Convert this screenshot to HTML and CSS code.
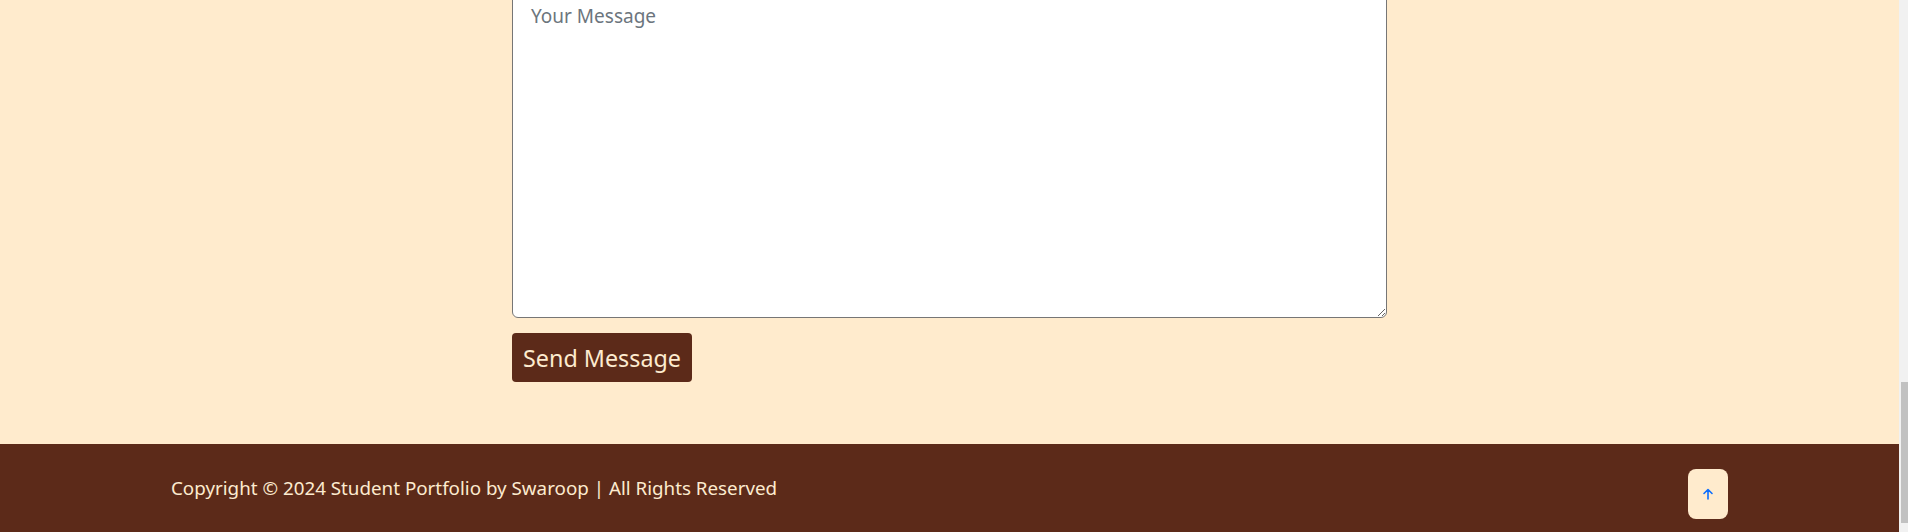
FILE: index.html
```html
<!DOCTYPE html>
<html lang="en">
<head>
<meta charset="utf-8">
<title>Contact</title>
<link rel="stylesheet" href="styles.css">
</head>
<body>
<div class="page">
  <div class="viewport">
    <section class="contact">
      <form class="contact-form">
        <textarea class="message" placeholder="Your Message"></textarea>
        <button type="button" class="send-btn">Send Message</button>
      </form>
    </section>
    <footer class="footer">
      <p class="copy">Copyright © 2024 Student Portfolio by Swaroop | All Rights Reserved</p>
      <a class="to-top" href="#" aria-label="Back to top">
        <svg width="12" height="12" viewBox="0 0 12 12" fill="none" stroke="#0d6efd" stroke-width="1.6" stroke-linecap="round" stroke-linejoin="round"><path d="M6 11V1.5M2 5.5L6 1.5L10 5.5"/></svg>
      </a>
    </footer>
  </div>
  <div class="scrollbar"><div class="thumb"></div></div>
</div>
</body>
</html>
```

FILE: styles.css
```css
* { box-sizing: border-box; }
html, body { margin: 0; padding: 0; }
body {
  font-family: "Noto Sans", "Open Sans", sans-serif;
  background: #ffebcd;
}
.page {
  display: flex;
  height: 532px;
  overflow: hidden;
}
.viewport {
  flex: 1;
  display: flex;
  flex-direction: column;
  justify-content: flex-end;
  overflow: hidden;
  background: #ffebcd;
}
.contact {
  padding-bottom: 62px;
}
.contact-form {
  width: 875px;
  margin: 0 auto;
}
.message {
  display: block;
  width: 100%;
  height: 327px;
  padding: 10px 18px 5px;
  border: 1px solid #767676;
  border-radius: 6px;
  background: #fff;
  font-family: inherit;
  font-size: 19px;
  line-height: 1.5;
  color: #212529;
}
.message::placeholder { color: #6c757d; }
.send-btn {
  display: block;
  margin-top: 15px;
  height: 49px;
  width: 180px;
  padding: 0 10px;
  border: none;
  border-radius: 4px;
  background: #5c2a19;
  color: #fdebcf;
  font-family: inherit;
  font-size: 23.3px;
}
.footer {
  height: 88px;
  flex: none;
  background: #5c2a19;
  padding: 0 171px;
  display: flex;
  justify-content: space-between;
  align-items: center;
}
.copy {
  margin: 0;
  color: #fdebcf;
  font-size: 18.8px;
}
.to-top {
  margin-top: 12px;
  width: 40px;
  height: 50px;
  border-radius: 8px;
  background: #ffebcd;
  display: flex;
  align-items: center;
  justify-content: center;
}
.scrollbar {
  width: 9px;
  flex: none;
  background: #f1f1f1;
  padding: 382px 0 0 2px;
}
.thumb {
  height: 141px;
  background: #c1c1c1;
}
```
